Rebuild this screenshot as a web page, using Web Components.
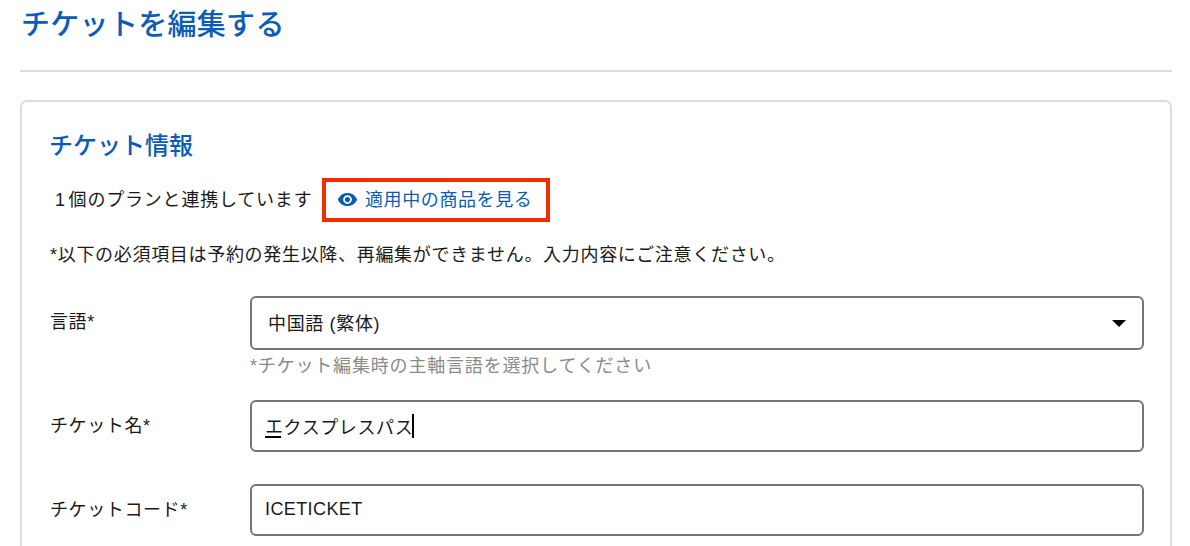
<!DOCTYPE html>
<html lang="ja">
<head>
<meta charset="utf-8">
<title>チケットを編集する</title>
<style>
	html, body { margin: 0; background: #fff; }
	body {
		font-family: "Liberation Sans", "Noto Sans CJK JP", sans-serif;
		color: #1a1a1a;
		height: 546px;
		overflow: hidden;
	}
</style>
</head>
<body>
<page-header>チケットを編集する</page-header>
<info-card heading="チケット情報">
	<linked-plans count="1 個のプランと連携しています" link="適用中の商品を見る"></linked-plans>
	<p class="notice">*以下の必須項目は予約の発生以降、再編集ができません。入力内容にご注意ください。</p>
	<form-row label="言語*" hint="*チケット編集時の主軸言語を選択してください">
		<select-box>中国語 (繁体)</select-box>
	</form-row>
	<form-row label="チケット名*">
		<text-box composing="エ" value="クスプレスパス" caret></text-box>
	</form-row>
	<form-row label="チケットコード*">
		<text-box value="ICETICKET" style="--tracking: .4px; --size: 18px"></text-box>
	</form-row>
</info-card>

<script>
	const BLUE = '#0b5cb8';

	customElements.define('page-header', class extends HTMLElement {
		constructor() {
			super();
			this.attachShadow({ mode: 'open' }).innerHTML = `
				<style>
					:host { display: block; margin: 0 18px 28px 20px; height: 72px; box-sizing: border-box; border-bottom: 2px solid #ddd; }
					h1 { margin: 0; padding: 8px 0 0 1px; font-size: 29px; line-height: 34px; letter-spacing: .3px; font-weight: 500; color: ${BLUE}; }
				</style>
				<h1><slot></slot></h1>
			`;
		}
	});

	customElements.define('info-card', class extends HTMLElement {
		constructor() {
			super();
			this.attachShadow({ mode: 'open' }).innerHTML = `
				<style>
					:host { display: block; margin: 0 18px 0 20px; box-sizing: border-box; border: 2px solid #ddd; border-radius: 7px; padding: 28px 28px 0; height: 480px; }
					h2 { margin: 0 0 16px -1px; font-size: 24px; line-height: 32px; font-weight: 500; color: ${BLUE}; }
					::slotted(.notice) { margin: 21px 0 29px; font-size: 18px; line-height: 24px; letter-spacing: .69px; color: #1a1a1a; white-space: nowrap; }
				</style>
				<h2></h2>
				<slot></slot>
			`;
			this.shadowRoot.querySelector('h2').textContent = this.getAttribute('heading');
		}
	});

	customElements.define('linked-plans', class extends HTMLElement {
		constructor() {
			super();
			this.attachShadow({ mode: 'open' }).innerHTML = `
				<style>
					:host { display: flex; align-items: center; height: 44px; font-size: 18px; letter-spacing: .6px; }
					.count { margin-left: 5px; padding-bottom: 4px; width: 267px; white-space: nowrap; letter-spacing: .8px; word-spacing: -3px; }
					a { box-sizing: border-box; display: flex; align-items: center; gap: 7px; height: 44px; width: 228px; padding-left: 11px; border: 4px solid #f52c00; color: ${BLUE}; text-decoration: none; white-space: nowrap; }
					.text { padding-bottom: 4px; }
					svg { flex: none; margin-bottom: 2px; }
				</style>
				<span class="count"></span>
				<a href="#">
					<svg width="21" height="21" viewBox="0 0 24 24" fill="currentColor"><path d="M12 4.5C7 4.5 2.73 7.61 1 12c1.73 4.39 6 7.5 11 7.5s9.27-3.11 11-7.5c-1.73-4.39-6-7.5-11-7.5zM12 17c-2.76 0-5-2.24-5-5s2.24-5 5-5 5 2.24 5 5-2.24 5-5 5zm0-8c-1.66 0-3 1.34-3 3s1.34 3 3 3 3-1.34 3-3-1.34-3-3-3z"/></svg>
					<span class="text"></span>
				</a>
			`;
			this.shadowRoot.querySelector('.count').textContent = this.getAttribute('count');
			this.shadowRoot.querySelector('.text').textContent = this.getAttribute('link');
		}
	});

	customElements.define('form-row', class extends HTMLElement {
		constructor() {
			super();
			this.attachShadow({ mode: 'open' }).innerHTML = `
				<style>
					:host { display: grid; grid-template-columns: 200px 894px; margin-bottom: 32px; }
					label { font-size: 18px; line-height: 24px; padding-top: 14px; letter-spacing: .6px; color: #1a1a1a; }
					.hint { font-size: 18px; line-height: 24px; margin-top: 4px; margin-bottom: -10px; letter-spacing: .82px; color: #8a8a8a; white-space: nowrap; }
					.hint:empty { display: none; }
				</style>
				<label></label>
				<div>
					<slot></slot>
					<div class="hint"></div>
				</div>
			`;
			this.shadowRoot.querySelector('label').textContent = this.getAttribute('label');
			this.shadowRoot.querySelector('.hint').textContent = this.getAttribute('hint') || '';
		}
	});

	customElements.define('select-box', class extends HTMLElement {
		constructor() {
			super();
			this.attachShadow({ mode: 'open' }).innerHTML = `
				<style>
					:host { display: flex; align-items: center; justify-content: space-between; box-sizing: border-box; height: 54px; padding: 0 16px; border: 2px solid #757575; border-radius: 6px; font-size: 18px; letter-spacing: .65px; color: #1a1a1a; }
					span { padding-bottom: 2px; }
					i { width: 0; height: 0; border-left: 7px solid transparent; border-right: 7px solid transparent; border-top: 7px solid #000; }
				</style>
				<span><slot></slot></span>
				<i></i>
			`;
		}
	});

	customElements.define('text-box', class extends HTMLElement {
		constructor() {
			super();
			this.attachShadow({ mode: 'open' }).innerHTML = `
				<style>
					:host { display: flex; align-items: center; box-sizing: border-box; height: 52px; padding: 0 13px; border: 2px solid #757575; border-radius: 6px; font-size: var(--size, 18px); letter-spacing: var(--tracking, .6px); color: #1a1a1a; white-space: nowrap; }
					u { text-decoration: none; line-height: 22px; margin-top: 2px; background: linear-gradient(#000, #000) left bottom / 16px 2px no-repeat; }
					.value { padding-bottom: 1px; }
					.caret { display: inline-block; width: 2px; height: 24px; background: #000; margin-left: -1px; }
				</style>
				<u></u><span class="value"></span><span class="caret"></span>
			`;
			const composing = this.shadowRoot.querySelector('u');
			if (this.hasAttribute('composing')) {
				composing.textContent = this.getAttribute('composing');
			} else {
				composing.remove();
			}
			this.shadowRoot.querySelector('.value').textContent = this.getAttribute('value');
			if (!this.hasAttribute('caret')) {
				this.shadowRoot.querySelector('.caret').remove();
			}
		}
	});
</script>
</body>
</html>
